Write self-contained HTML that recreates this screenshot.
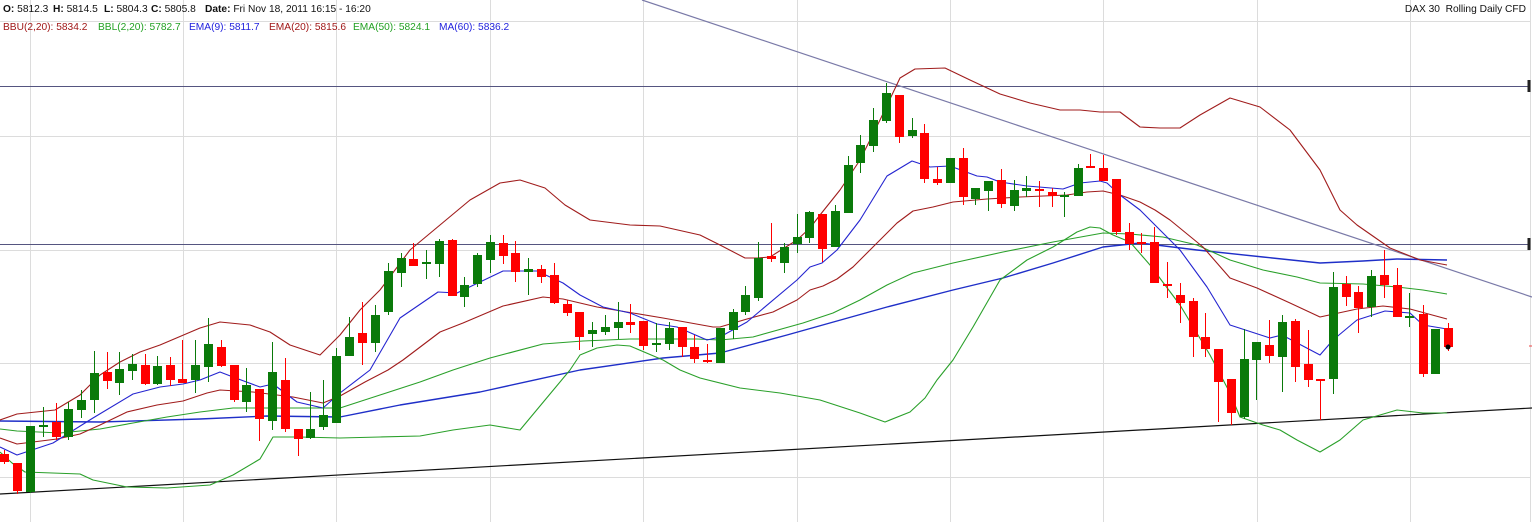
<!DOCTYPE html>
<html><head><meta charset="utf-8"><style>
html,body{margin:0;padding:0;background:#fff;width:1532px;height:522px;overflow:hidden}
.t{position:absolute;font-family:"Liberation Sans",Arial,sans-serif;font-size:10.2px;white-space:nowrap;line-height:14px}
b{font-weight:bold}
</style></head><body>
<svg width="1532" height="522" style="position:absolute;left:0;top:0" xmlns="http://www.w3.org/2000/svg">
<g stroke="#dcdcdc" stroke-width="1">
<path d="M30.5 0V522M183.5 0V522M336.5 0V522M490.5 0V522M643.5 0V522M797.5 0V522M950.5 0V522M1103.5 0V522M1257.5 0V522M1410.5 0V522M1530.5 0V522"/>
<path d="M0 21.5H1530M0 136.5H1530M0 250.5H1530M0 363.5H1530M0 477.5H1530"/>
</g>
<g stroke="#555580" stroke-width="1">
<path d="M0 86.5H1530M0 244.5H1530"/>
</g>
<path d="M1529 80V92M1529 238V250" stroke="#222" stroke-width="3"/>
<path d="M1529 346H1532" stroke="#e44" stroke-width="1"/>
<path d="M642 0L1532 297" stroke="#7a7aa8" stroke-width="1.2" fill="none"/>
<path d="M0 494L1532 408" stroke="#111" stroke-width="1.2" fill="none"/>
<g fill="none" stroke-width="1.1" stroke-linejoin="round">
<polyline stroke="#1f2fc8" stroke-width="1.4" points="0,421 100,422 200,419 267,416 340,417 400,405 480,392 580,370 663,358 720,353 787,335 887,307 953,290 1003,278 1053,263 1103,247 1140,243 1197,250 1263,257 1320,263 1363,261 1397,259 1447,260"/>
<polyline stroke="#2aa02a" points="0,429 17,431 60,433 100,429 133,423 167,417 200,412 233,408 267,408 300,408 340,408 380,395 420,382 453,370 490,358 543,344 583,341 630,339 697,339 720,340 753,337 803,323 833,313 860,300 887,285 913,273 953,263 1003,252 1053,242 1103,233 1130,234 1163,237 1197,245 1230,260 1263,270 1297,277 1320,283 1363,284 1397,287 1423,290 1447,294"/>
<polyline stroke="#2aa02a" points="0,452 12,463 25,472 80,474 93,480 127,487 167,488 210,485 233,475 260,459 273,437 300,437 340,438 380,437 420,436 453,430 490,425 520,430 545,400 570,370 580,355 597,348 617,345 630,346 663,360 680,370 700,378 740,388 780,393 820,400 860,413 885,422 910,412 925,398 937,380 953,360 973,327 1000,280 1027,260 1053,247 1077,232 1090,227 1100,228 1113,235 1130,242 1150,265 1180,305 1210,355 1230,393 1240,417 1263,425 1280,430 1297,440 1320,452 1340,440 1363,420 1397,410 1423,413 1447,413"/>
<polyline stroke="#a01c1c" points="0,438 17,444 33,442 57,439 80,434 100,425 127,412 157,405 183,401 207,393 220,390 253,392 293,397 323,403 340,396 365,382 388,370 403,360 440,332 463,323 503,306 543,297 563,299 597,307 663,318 713,327 720,327 747,319 773,312 797,300 810,290 823,286 837,279 853,267 877,243 897,223 913,211 933,207 953,202 987,199 1020,197 1067,195 1087,192 1103,191 1120,195 1140,202 1155,210 1170,220 1203,247 1230,278 1257,288 1290,303 1320,317 1357,309 1383,306 1410,309 1447,319"/>
<polyline stroke="#a01c1c" points="0,420 17,414 55,410 80,395 100,375 120,362 140,352 160,345 200,328 220,322 250,325 270,332 290,345 320,355 340,335 360,310 380,290 410,250 440,225 470,200 500,183 520,180 545,188 565,205 590,220 630,225 660,226 700,235 720,245 745,258 757,258 770,257 797,240 810,228 820,215 840,190 860,160 880,120 900,78 915,69 945,68 970,80 1000,94 1030,103 1060,110 1080,110 1100,112 1120,112 1140,127 1160,128 1180,128 1200,115 1230,98 1260,107 1290,130 1320,170 1340,210 1357,225 1390,248 1420,260 1447,265"/>
<polyline stroke="#2424d0" points="0,447 17,455 53,443 93,418 133,394 160,387 183,384 200,380 220,372 233,377 260,387 273,384 297,402 323,408 340,393 370,370 400,318 438,292 457,293 503,271 537,271 563,283 580,295 603,307 630,313 657,324 677,327 707,340 720,337 747,322 797,280 810,267 822,263 837,250 860,220 887,176 912,161 930,167 950,166 977,176 987,177 1000,182 1027,186 1063,189 1080,183 1100,181 1107,183 1120,195 1140,210 1150,220 1180,250 1207,287 1230,325 1270,338 1282,335 1320,355 1333,340 1357,320 1385,311 1410,313 1423,325 1447,329"/>
</g>
<g stroke-width="1">
<g stroke="#ff0000" fill="#ff0000">
<path d="M4.5 450V464M17.5 463V494M56.5 403V440M107.5 352V389M145.5 354V385M170.5 357V386M182.5 340V383M221.5 340V367M234.5 365V402M259.5 389V441M285.5 358V432M298.5 429V456M362.5 302V365M413.5 243V266M452.5 239V296M503.5 235V264M515.5 241V282M541.5 265V283M554.5 263V304M567.5 300V316M579.5 312V350M630.5 304V333M643.5 321V350M682.5 327V357M694.5 335V363M707.5 344V363M771.5 223V262M822.5 214V262M899.5 95V143M924.5 124V183M937.5 167V185M963.5 148V205M1001.5 169V208M1039.5 181V207M1052.5 188V207M1090.5 154V168M1103.5 155V181M1116.5 179V235M1129.5 223V250M1141.5 233V253M1154.5 227V283M1167.5 262V298M1180.5 283V323M1193.5 298V357M1205.5 313V357M1218.5 349V422M1231.5 379V425M1269.5 320V363M1295.5 319V382M1308.5 330V387M1320.5 379V420M1346.5 276V306M1358.5 286V333M1384.5 250V298M1397.5 268V317M1423.5 305V377M1448.5 323V351"/>
<g stroke="none">
<rect x="0" y="454" width="9" height="8"/><rect x="13" y="463" width="9" height="28"/><rect x="52" y="422" width="9" height="15"/><rect x="103" y="372" width="9" height="9"/><rect x="141" y="365" width="9" height="19"/><rect x="166" y="365" width="9" height="15"/><rect x="178" y="379" width="9" height="4"/><rect x="217" y="347" width="9" height="19"/><rect x="230" y="365" width="9" height="35"/><rect x="255" y="389" width="9" height="30"/><rect x="281" y="380" width="9" height="49"/><rect x="294" y="429" width="9" height="10"/><rect x="358" y="333" width="9" height="10"/><rect x="409" y="259" width="9" height="7"/><rect x="448" y="240" width="9" height="56"/><rect x="499" y="243" width="9" height="13"/><rect x="511" y="253" width="9" height="19"/><rect x="537" y="269" width="9" height="8"/><rect x="550" y="275" width="9" height="28"/><rect x="563" y="304" width="9" height="9"/><rect x="575" y="312" width="9" height="25"/><rect x="626" y="322" width="9" height="3"/><rect x="639" y="321" width="9" height="25"/><rect x="678" y="327" width="9" height="20"/><rect x="690" y="347" width="9" height="12"/><rect x="703" y="360" width="9" height="2"/><rect x="767" y="256" width="9" height="3"/><rect x="818" y="214" width="9" height="35"/><rect x="895" y="95" width="9" height="42"/><rect x="920" y="133" width="9" height="46"/><rect x="933" y="179" width="9" height="4"/><rect x="959" y="158" width="9" height="39"/><rect x="997" y="180" width="9" height="24"/><rect x="1035" y="189" width="9" height="2"/><rect x="1048" y="192" width="9" height="4"/><rect x="1086" y="166" width="9" height="2"/><rect x="1099" y="168" width="9" height="13"/><rect x="1112" y="179" width="9" height="53"/><rect x="1125" y="232" width="9" height="12"/><rect x="1137" y="242" width="9" height="2"/><rect x="1150" y="242" width="9" height="41"/><rect x="1163" y="284" width="9" height="2"/><rect x="1176" y="295" width="9" height="8"/><rect x="1189" y="301" width="9" height="36"/><rect x="1201" y="337" width="9" height="12"/><rect x="1214" y="349" width="9" height="33"/><rect x="1227" y="379" width="9" height="34"/><rect x="1265" y="345" width="9" height="11"/><rect x="1291" y="321" width="9" height="46"/><rect x="1304" y="364" width="9" height="16"/><rect x="1316" y="379" width="9" height="2"/><rect x="1342" y="284" width="9" height="13"/><rect x="1354" y="292" width="9" height="16"/><rect x="1380" y="275" width="9" height="10"/><rect x="1393" y="285" width="9" height="32"/><rect x="1419" y="314" width="9" height="60"/><rect x="1444" y="328" width="9" height="19"/>
</g></g>
<g stroke="#0a7a0a" fill="#0a7a0a">
<path d="M30.5 426V493M43.5 407V437M68.5 402V440M81.5 390V418M94.5 351V413M119.5 352V395M132.5 354V380M157.5 356V385M195.5 340V393M208.5 318V382M246.5 368V412M272.5 342V430M310.5 392V439M323.5 380V430M336.5 348V423M349.5 317V356M375.5 305V352M388.5 263V315M401.5 253V287M426.5 250V279M439.5 239V277M464.5 277V307M477.5 253V287M490.5 235V273M528.5 258V295M592.5 322V347M605.5 315V335M618.5 302V339M656.5 323V352M669.5 322V350M720.5 328V363M733.5 309V339M745.5 286V315M758.5 242V301M784.5 243V273M797.5 214V253M809.5 211V243M835.5 205V247M848.5 156V213M860.5 135V173M873.5 108V152M886.5 83V123M912.5 118V138M950.5 158V183M975.5 188V205M988.5 181V211M1014.5 180V211M1026.5 176V197M1064.5 192V217M1078.5 164V196M1244.5 329V419M1256.5 342V400M1282.5 315V392M1333.5 272V394M1371.5 270V317M1409.5 293V327M1435.5 329V374"/>
<g stroke="none">
<rect x="26" y="426" width="9" height="66"/><rect x="39" y="425" width="9" height="2"/><rect x="64" y="409" width="9" height="28"/><rect x="77" y="400" width="9" height="10"/><rect x="90" y="373" width="9" height="27"/><rect x="115" y="369" width="9" height="14"/><rect x="128" y="364" width="9" height="7"/><rect x="153" y="366" width="9" height="18"/><rect x="191" y="365" width="9" height="15"/><rect x="204" y="344" width="9" height="23"/><rect x="242" y="385" width="9" height="17"/><rect x="268" y="372" width="9" height="49"/><rect x="306" y="429" width="9" height="9"/><rect x="319" y="415" width="9" height="12"/><rect x="332" y="356" width="9" height="67"/><rect x="345" y="337" width="9" height="19"/><rect x="371" y="315" width="9" height="28"/><rect x="384" y="271" width="9" height="41"/><rect x="397" y="258" width="9" height="15"/><rect x="422" y="262" width="9" height="2"/><rect x="435" y="241" width="9" height="23"/><rect x="460" y="285" width="9" height="12"/><rect x="473" y="255" width="9" height="29"/><rect x="486" y="242" width="9" height="18"/><rect x="524" y="269" width="9" height="3"/><rect x="588" y="330" width="9" height="4"/><rect x="601" y="327" width="9" height="5"/><rect x="614" y="322" width="9" height="6"/><rect x="652" y="343" width="9" height="2"/><rect x="665" y="328" width="9" height="16"/><rect x="716" y="328" width="9" height="35"/><rect x="729" y="312" width="9" height="18"/><rect x="741" y="295" width="9" height="17"/><rect x="754" y="258" width="9" height="40"/><rect x="780" y="247" width="9" height="16"/><rect x="793" y="237" width="9" height="7"/><rect x="805" y="212" width="9" height="26"/><rect x="831" y="211" width="9" height="36"/><rect x="844" y="165" width="9" height="48"/><rect x="856" y="145" width="9" height="18"/><rect x="869" y="120" width="9" height="26"/><rect x="882" y="93" width="9" height="28"/><rect x="908" y="130" width="9" height="6"/><rect x="946" y="158" width="9" height="25"/><rect x="971" y="188" width="9" height="11"/><rect x="984" y="181" width="9" height="10"/><rect x="1010" y="190" width="9" height="16"/><rect x="1022" y="188" width="9" height="3"/><rect x="1060" y="195" width="9" height="2"/><rect x="1074" y="168" width="9" height="28"/><rect x="1240" y="359" width="9" height="58"/><rect x="1252" y="342" width="9" height="18"/><rect x="1278" y="322" width="9" height="35"/><rect x="1329" y="287" width="9" height="92"/><rect x="1367" y="276" width="9" height="31"/><rect x="1405" y="316" width="9" height="2"/><rect x="1431" y="329" width="9" height="45"/>
</g></g>
</g>
<circle cx="1448" cy="347" r="2.5" fill="#000"/>
</svg>
<div class="t" style="left:3px;top:3px;color:#111"><b>O:</b> 5812.3</div>
<div class="t" style="left:53px;top:3px;color:#111"><b>H:</b> 5814.5</div>
<div class="t" style="left:104px;top:3px;color:#111"><b>L:</b> 5804.3</div>
<div class="t" style="left:151px;top:3px;color:#111"><b>C:</b> 5805.8</div>
<div class="t" style="left:205px;top:3px;color:#111"><b>Date:</b> Fri Nov 18, 2011 16:15 - 16:20</div>
<div class="t" style="right:6px;top:3px;color:#111">DAX 30&nbsp; Rolling Daily CFD</div>
<div class="t" style="left:3px;top:21px;color:#a01818">BBU(2,20): 5834.2</div>
<div class="t" style="left:98px;top:21px;color:#22a022">BBL(2,20): 5782.7</div>
<div class="t" style="left:189px;top:21px;color:#2222dd">EMA(9): 5811.7</div>
<div class="t" style="left:269px;top:21px;color:#a01818">EMA(20): 5815.6</div>
<div class="t" style="left:353px;top:21px;color:#22a022">EMA(50): 5824.1</div>
<div class="t" style="left:439px;top:21px;color:#2222dd">MA(60): 5836.2</div>
</body></html>
